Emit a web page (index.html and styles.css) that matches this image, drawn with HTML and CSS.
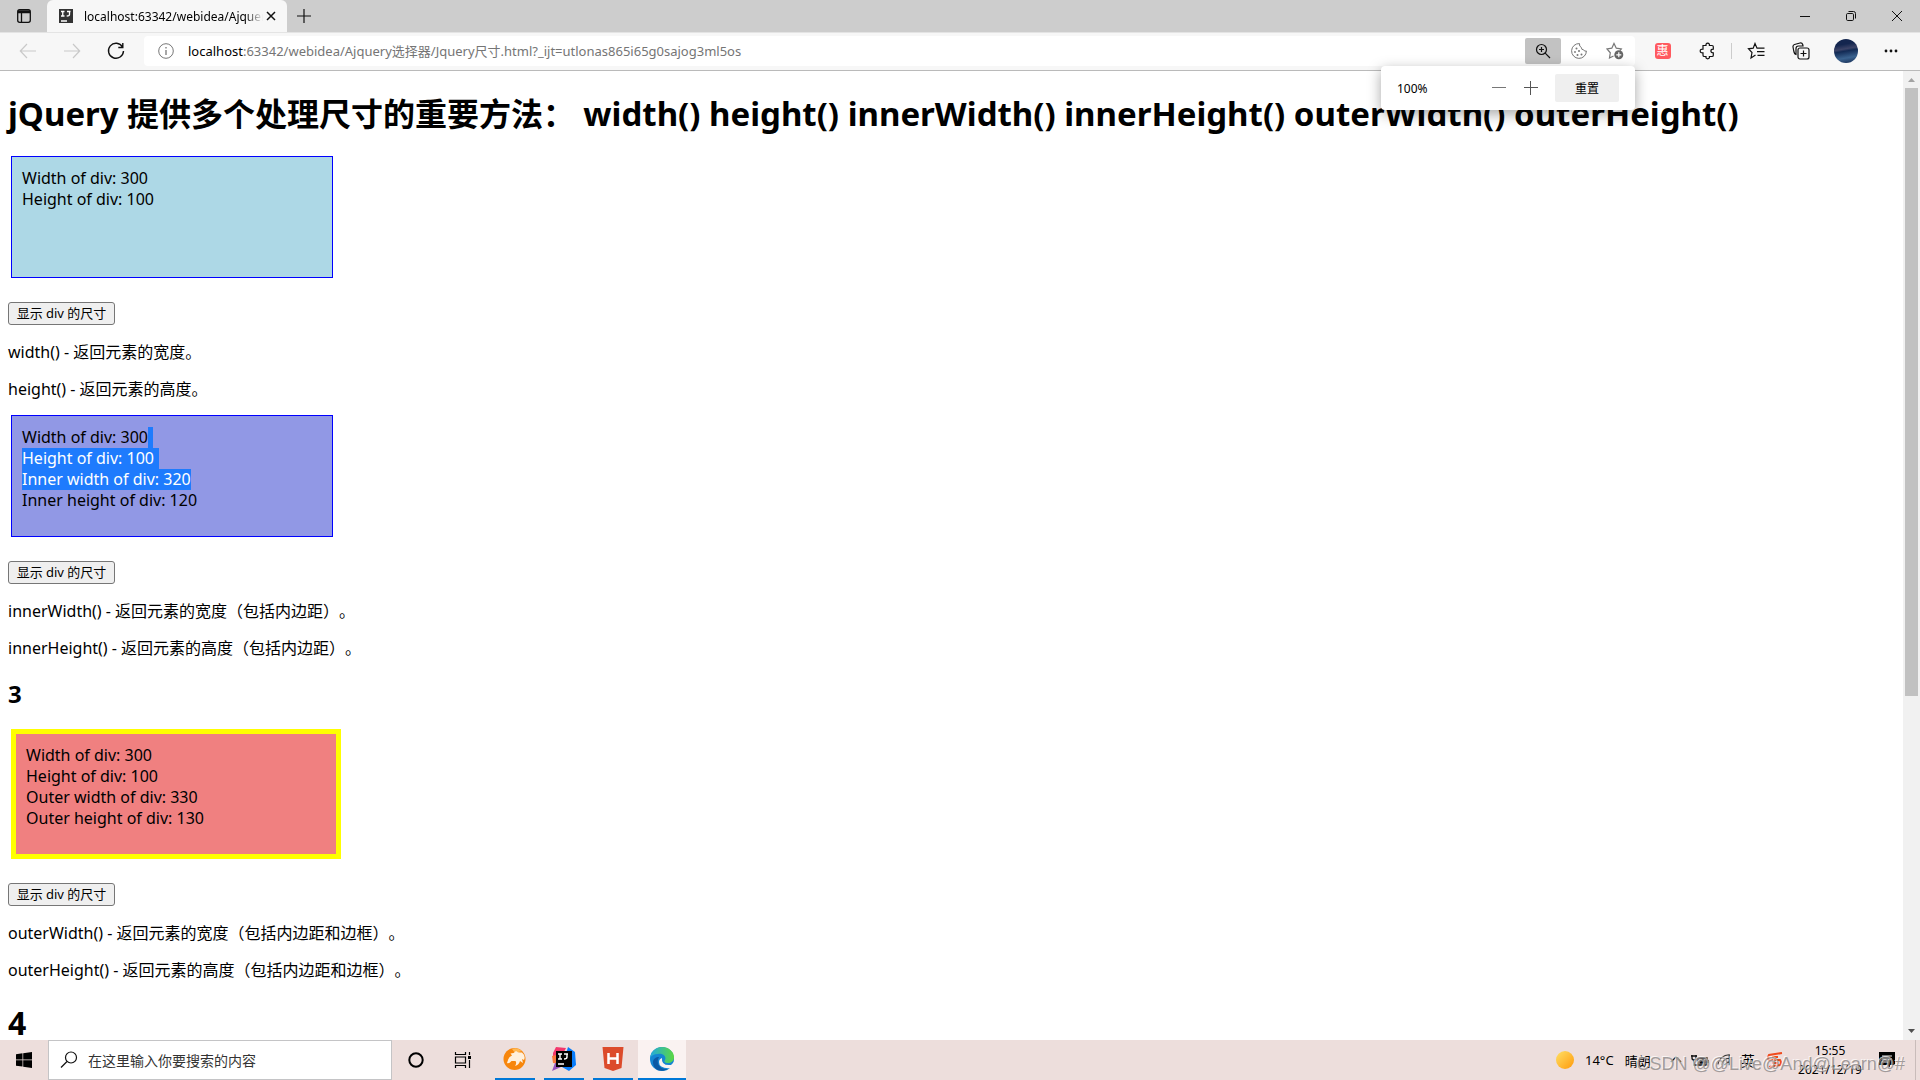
FILE: index.html
```html
<!DOCTYPE html>
<html lang="zh-CN">
<head>
<meta charset="utf-8">
<title>Jquery尺寸</title>
<link rel="stylesheet" href="styles.css">
</head>
<body>
<header class="browser">
  <div class="tabstrip">
    <button class="tab-menu" aria-label="标签页操作菜单"><svg width="16" height="16" viewBox="0 0 16 16" fill="none" stroke="#111" stroke-width="1.3"><rect x="1.7" y="1.7" width="12.6" height="12.6" rx="2"/><path d="M2 3h12M2 4.500h12M5.500 5v9"/></svg></button>
    <div class="tab">
      <svg width="14" height="14" viewBox="0 0 14 14"><path fill="#333" d="M0 0h14v14H0z"/><path d="M2 2.500h3.500M3.750 2.500v4.500M2 7h3.500M8 2.500h3.500M10.500 2.500v3q0 1.500-2.800 1.500M2 12h6" stroke="#fff" stroke-width="1.300" fill="none"/></svg>
      <span class="tab-title">localhost:63342/webidea/Ajquery</span>
      <button class="tab-close" aria-label="关闭标签页"><svg width="10" height="10" viewBox="0 0 10 10" stroke="#111" stroke-width="1.500"><path d="M1 1l8 8M9 1L1 9"/></svg></button>
    </div>
    <button class="new-tab" aria-label="新建标签页"><svg width="16" height="16" viewBox="0 0 16 16" stroke="#111" stroke-width="1.200"><path d="M8 1v14M1 8h14"/></svg></button>
    <div class="window-controls">
      <button aria-label="最小化"><svg width="12" height="12" viewBox="0 0 12 12" stroke="#111"><path d="M1 6.500h10"/></svg></button>
      <button aria-label="还原"><svg width="12" height="12" viewBox="0 0 12 12" fill="none" stroke="#111"><rect x="1.500" y="3.500" width="7" height="7" rx="1.200"/><path d="M3.500 1.500h5q2 0 2 2v5"/></svg></button>
      <button aria-label="关闭"><svg width="12" height="12" viewBox="0 0 12 12" stroke="#111"><path d="M1 1l10 10M11 1L1 11"/></svg></button>
    </div>
  </div>
  <div class="toolbar">
    <div class="nav">
      <button aria-label="后退"><svg width="18" height="18" viewBox="0 0 18 18" fill="none" stroke="#c9c9c9" stroke-width="1.200"><path d="M17 9H1.500M8 2L1.300 9 8 16"/></svg></button>
      <button aria-label="前进"><svg width="18" height="18" viewBox="0 0 18 18" fill="none" stroke="#c9c9c9" stroke-width="1.200"><path d="M1 9h15.500M10 2l6.700 7-6.700 7"/></svg></button>
      <button aria-label="刷新"><svg width="18" height="18" viewBox="0 0 18 18" fill="none" stroke="#111" stroke-width="1.400"><path d="M15.500 5A7.500 7.500 0 1 0 16.500 9M15.800 1v4.500h-4.500"/></svg></button>
    </div>
    <div class="address">
      <svg width="16" height="16" viewBox="0 0 16 16" fill="none" stroke="#777"><circle cx="8" cy="8" r="7.300"/><path d="M8 7v5M8 4v1.500" stroke-width="1.300"/></svg>
      <div class="url" role="textbox" aria-label="地址栏" contenteditable="true" spellcheck="false"><span class="host">localhost</span>:63342/webidea/Ajquery选择器/Jquery尺寸.html?_ijt=utlonas865i65g0sajog3ml5os</div>
      <button class="zoomed" aria-label="缩放"><svg width="16" height="16" viewBox="0 0 16 16" fill="none" stroke="#111" stroke-width="1.200"><circle cx="6.500" cy="6.500" r="5"/><path d="M10.200 10.200L15 15M6.500 4v5M4 6.500h5"/></svg></button>
      <button aria-label="Cookie"><svg width="16" height="16" viewBox="0 0 16 16" fill="none" stroke="#777"><path d="M8.500.600A7.400 7.400 0 1 0 15.400 8q-2 .8-2.800-1.200-2.300.2-2.200-2.300Q8 3.600 8.500.600z"/><g fill="#777" stroke="none"><circle cx="5.500" cy="5.500" r="1"/><circle cx="8" cy="8" r="1"/><circle cx="4" cy="9" r=".9"/><circle cx="6.500" cy="12" r="1"/><circle cx="10.500" cy="11.500" r="1"/></g></svg></button>
      <button aria-label="添加到收藏夹"><svg width="18" height="18" viewBox="0 0 18 18" fill="none" stroke="#777" stroke-width="1.200"><path d="M7.500 14L3.500 16l.8-5.200L1 7l4.800-.8L8 1.500l2.300 4.700 5 .8-1.300 1.500"/><circle cx="12.800" cy="12.800" r="4.500" fill="#666" stroke="none"/><path stroke="#fff" d="M12.800 10.300v5M10.300 12.800h5"/></svg></button>
      <div class="zoom-popup" role="dialog" aria-label="页面缩放">
        <span class="zoom-level">100%</span>
        <button class="zoom-step" aria-label="缩小"><svg width="14" height="14" viewBox="0 0 14 14" stroke="#777"><path d="M0 6.500h14"/></svg></button>
        <button class="zoom-step" aria-label="放大"><svg width="14" height="14" viewBox="0 0 14 14" stroke="#555"><path d="M0 6.500h14M6.500 0v14"/></svg></button>
        <button class="zoom-reset">重置</button>
      </div>
    </div>
    <div class="actions">
      <button aria-label="惠"><span class="deal">惠</span></button>
      <button aria-label="扩展"><svg width="18" height="18" viewBox="0 0 18 18" fill="none" stroke="#111" stroke-width="1.200"><path d="M4 3.500h3q-.4-2.300 1.700-2.300t1.700 2.300H13q1.300 0 1.300 1.300v2.400q-2.400 0-2.400 1.800t2.400 1.800v2.400q0 1.300-1.300 1.300h-2.600q.4 2.300-1.700 2.300T7 14.500H5.300Q4 14.500 4 13.200v-2.400q-2.800.2-2.800-1.800T4 7.200z"/></svg></button>
      <span class="divider"></span>
      <button aria-label="收藏夹"><svg width="18" height="18" viewBox="0 0 18 18" fill="none" stroke="#111" stroke-width="1.200"><path d="M8.500 13L4 16l1-5.500L1.500 6.800l4.700-.6L8 1.500l2 4.700h7.500M10 9.700h7.500M10.500 13.300h7"/></svg></button>
      <button aria-label="集锦"><svg width="18" height="18" viewBox="0 0 18 18" fill="none" stroke="#111" stroke-width="1.200"><rect x="6" y="6" width="11" height="11" rx="2"/><path d="M11.500 8.500v6M8.500 11.500h6M4 12.500Q2.500 12 2 10L1 5q-.2-2 1.500-2.500L8 1q2-.4 2.700 1.500L11 4H6.500Q4 4 4 6.500z"/></svg></button>
      <button aria-label="个人资料"><span class="avatar"></span></button>
      <button aria-label="设置及其他"><svg width="14" height="4" viewBox="0 0 14 4" fill="#111"><circle cx="2" cy="2" r="1.400"/><circle cx="7" cy="2" r="1.400"/><circle cx="12" cy="2" r="1.400"/></svg></button>
    </div>
  </div>
</header>

<div class="viewport">
  <main class="page">
    <h1><span class="latin">jQuery</span> 提供多个处理尺寸的重要方法： <span class="latin">width() height() innerWidth() innerHeight() outerWidth() outerHeight()</span></h1>
    <div class="box box-blue">Width of div: 300<br>Height of div: 100</div>
    <button class="show">显示 div 的尺寸</button>
    <p>width() - 返回元素的宽度。</p>
    <p>height() - 返回元素的高度。</p>
    <div class="box box-violet">Width of div: 300<mark class="line-end"></mark><br><mark class="line-end">Height of div: 100</mark><br><mark>Inner width of div: 320</mark><br>Inner height of div: 120</div>
    <button class="show">显示 div 的尺寸</button>
    <p>innerWidth() - 返回元素的宽度（包括内边距）。</p>
    <p>innerHeight() - 返回元素的高度（包括内边距）。</p>
    <h2>3</h2>
    <div class="box box-coral">Width of div: 300<br>Height of div: 100<br>Outer width of div: 330<br>Outer height of div: 130</div>
    <button class="show">显示 div 的尺寸</button>
    <p>outerWidth() - 返回元素的宽度（包括内边距和边框）。</p>
    <p>outerHeight() - 返回元素的高度（包括内边距和边框）。</p>
    <h1>4</h1>
  </main>
  <div class="scrollbar">
    <svg width="17" height="17" viewBox="0 0 17 17"><path fill="#a3a3a3" d="M5 11h7L8.500 7z"/></svg>
    <div class="track"><div class="thumb"></div></div>
    <svg width="17" height="17" viewBox="0 0 17 17"><path fill="#505050" d="M5 6h7l-3.500 4z"/></svg>
  </div>
</div>

<footer class="taskbar">
  <button class="start" aria-label="开始"><svg width="16" height="16" viewBox="0 0 16 16"><path d="M0 2.300L6.500 1.300V7.600H0zM7.200 1.200L16 0v7.600H7.200zM0 8.300h6.500v6.300L0 13.700zM7.200 8.300H16V16l-8.800-1.200z"/></svg></button>
  <label class="search">
    <svg width="18" height="18" viewBox="0 0 18 18" fill="none" stroke="#111" stroke-width="1.200"><circle cx="11" cy="6.500" r="5.500"/><path d="M7 10.500L1 16.500"/></svg>
    <input type="text" placeholder="在这里输入你要搜索的内容" aria-label="搜索">
  </label>
  <nav class="apps">
    <button aria-label="Cortana"><svg width="16" height="16" viewBox="0 0 16 16" fill="none" stroke="#000" stroke-width="2"><circle cx="8" cy="8" r="6.700"/></svg></button>
    <button aria-label="任务视图"><svg width="18" height="16" viewBox="0 0 18 16" fill="none" stroke="#000" stroke-width="1.200"><path d="M1.500 0v2.500h10V0M1.500 16v-2.500h10V16M1.500 5h10v6h-10zM15.500 0v3M15.500 8v8"/><path fill="#000" stroke="none" d="M14 4h3v3h-3z"/></svg></button>
    <button class="running" aria-label="UC浏览器"><svg width="24" height="24" viewBox="0 0 24 24"><circle cx="11.500" cy="12" r="11" fill="#f7860c"/><path fill="#ffb955" d="M9 2Q14 0 19 4L12 6z"/><path fill="#fff0dc" d="M4 16Q5 10 9 8.500L7.500 6.500Q11 6.500 13 4Q15 6 19 5.500Q23 9 21 13L19 12L20 16L17 14Q16 18 12 19Q14 16 12.500 14L8.500 14Q6 17 4 16z"/></svg></button>
    <button class="running" aria-label="IntelliJ IDEA"><svg width="24" height="24" viewBox="0 0 24 24"><path fill="#f3386c" d="M1 6L4 0l10 1-8 16-5-4z"/><path fill="#f97a3d" d="M0 9l8-2v10l-7-1z"/><path fill="#087cfa" d="M16 0l7 5 1 13-7 6-7-4z"/><path fill="#9753bd" d="M3 16h12l-6 4-9 4z"/><path d="M4 4h16v16H4z"/><path d="M6 7h4M8 7v5M6 12h4M12 7h4M15 7v3q0 2-3 2M6 17h6" stroke="#fff" stroke-width="1.400" fill="none"/></svg></button>
    <button class="running" aria-label="HBuilder"><svg width="24" height="24" viewBox="0 0 24 24"><path fill="#dc4b2b" d="M1.500 0h21l-2 21-8.500 3-8.500-3z"/><path d="M7.500 6v11M16.500 6v11M7.500 11.500h9" stroke="#fff" stroke-width="2.500"/></svg></button>
    <button class="running active" aria-label="Microsoft Edge"><svg width="24" height="24" viewBox="0 0 24 24"><defs><linearGradient id="sea" x1="0" x2="1"><stop stop-color="#22a9e0"/><stop offset="1" stop-color="#5bd83f"/></linearGradient></defs><circle cx="12" cy="12" r="12" fill="#1485d2"/><path fill="url(#sea)" d="M0 11C1 4 6 0 12 0c7 0 12 5 12 10 0 4-3 6-6 6-4 0-4-2-3-3 2-4-3-7-7-6-4 0-7 2-8 4z"/><path fill="#0c59a4" d="M9 10c-4 7 2 13 9 12-7 4-15 1-15-7 0-3 3-5 6-5z"/><path fill="#faf2f1" d="M12 11q-1 8 9 7l3-3v3l-3 3q-12 1-12-6 0-3 3-4z"/></svg></button>
  </nav>
  <div class="tray">
    <button class="weather"><span class="sun"></span><span>14°C</span><span>晴朗</span></button>
    <button aria-label="显示隐藏的图标"><svg width="14" height="14" viewBox="0 0 14 14" fill="none" stroke="#222" stroke-width="1.300"><path d="M2 9l5-5 5 5"/></svg></button>
    <button aria-label="电源"><svg width="18" height="14" viewBox="0 0 18 14" fill="none" stroke="#111" stroke-width="1.300"><path d="M7 5h9v7H7zM17 7v3M1 2v3q0 2 2 2t2-2V2M0 3h6M3 7v5h4"/><path fill="#111" d="M9 7h5v3H9z"/></svg></button>
    <button aria-label="网络"><svg width="14" height="14" viewBox="0 0 16 16" fill="none" stroke="#333" stroke-width="1.300"><path d="M1 13A13 13 0 0 1 14 2v12M5 14A9 9 0 0 1 14 6M9 14q1-3 5-4"/></svg></button>
    <button class="ime">英</button>
    <button class="sogou" aria-label="搜狗输入法"><svg width="18" height="18" viewBox="0 0 18 18" fill="none" stroke="#f04a1d" stroke-width="2"><path d="M16 2L3 4q-2 3 0 5l11 0q2 3 0 5L3 16M12 6H6M6 12h6"/></svg></button>
    <button class="clock"><span>15:55</span><span>2021/12/19</span></button>
    <button class="notice" aria-label="通知中心"><svg width="16" height="16" viewBox="0 0 16 16"><path d="M0 0h16v13h-5v3l-3-3H0z"/><path d="M3 4h10M3 7h10M3 10h6" stroke="#eee"/></svg></button>
  </div>
</footer>
<div class="watermark">CSDN @@Live@And@Learn@#</div>
</body>
</html>
```
FILE: styles.css
```css
* { box-sizing: border-box; }

body {
  margin: 0;
  height: 100vh;
  display: flex;
  flex-direction: column;
  overflow: hidden;
  position: relative;
  background: #fff;
  color: #000;
  font-family: "Noto Sans", "Noto Sans CJK SC", sans-serif;
  font-size: 12px;
  text-spacing-trim: space-all;
}

button {
  font: inherit;
  color: inherit;
  border: 0;
  padding: 0;
  background: none;
  display: flex;
  align-items: center;
  justify-content: center;
  flex: none;
}

svg { display: block; flex: none; }

/* Tab strip */
.tabstrip {
  display: flex;
  height: 32px;
  background: #cdcdcd;
}
.tab-menu { width: 47px; }
.tab {
  display: flex;
  align-items: center;
  width: 240px;
  padding: 0 8px 0 12px;
  background: #f7f7f7;
  border-radius: 6px 6px 0 0;
}
.tab-title {
  flex: 1;
  margin-left: 11px;
  overflow: hidden;
  white-space: nowrap;
  mask-image: linear-gradient(90deg, #000 90%, transparent);
}
.tab-close { width: 16px; height: 16px; }
.new-tab { width: 34px; }
.window-controls { display: flex; margin-left: auto; }
.window-controls button { width: 46px; }

/* Toolbar */
.toolbar {
  display: flex;
  align-items: flex-start;
  height: 39px;
  padding-top: 3px;
  background: #f7f7f7;
  border-top: 1px solid #e4e4e4;
  border-bottom: 1px solid #bababa;
}
.nav { display: flex; padding: 0 6px; }
.nav button { width: 44px; height: 30px; }
.address {
  position: relative;
  flex: 1;
  display: flex;
  align-items: center;
  height: 30px;
  padding: 0 2px 0 14px;
  background: #fff;
  border-radius: 4px;
}
.address > button { width: 36px; height: 26px; border-radius: 2px; }
.address > .zoomed { background: #c2c2c2; }
.url {
  flex: 1;
  margin: 0 0 2px 14px;
  font-size: 13px;
  color: #757575;
  white-space: nowrap;
  outline: 0;
}
.host { color: #000; }
.actions { display: flex; align-items: center; padding: 0 7px 0 5px; }
.actions button { width: 45px; height: 30px; }
.divider { width: 1px; height: 16px; margin: 0 1px; background: #ccc; }
.deal {
  width: 16px;
  height: 16px;
  border-radius: 3px;
  background: #ff5a5f;
  color: #fff;
  font-size: 12px;
  line-height: 16px;
}
.avatar {
  width: 24px;
  height: 24px;
  border-radius: 50%;
  background: linear-gradient(170deg, #14264f 25%, #3d4468 42%, #122a55 50%, #3b6390 75%, #13284f);
}

.zoom-popup {
  position: absolute;
  z-index: 2;
  top: 100%;
  right: 0;
  display: flex;
  align-items: center;
  width: 254px;
  height: 44px;
  padding: 0 16px;
  background: #fff;
  border-radius: 4px;
  box-shadow: 0 4px 14px rgba(0, 0, 0, .35);
}
.zoom-level { flex: 1; }
.zoom-step { width: 32px; }
.zoom-reset { width: 64px; height: 28px; margin-left: 8px; background: #efefef; border-radius: 2px; }

/* Web page */
.viewport { flex: 1; min-height: 0; display: flex; }
.page {
  flex: 1;
  padding: 1px 8px 0;
  overflow: hidden;
  font-size: 16px;
  line-height: 21px;
}
h1 { margin: 21px 0; font-size: 32px; line-height: 42px; white-space: nowrap; }
.latin { font-size: 33px; line-height: 40px; }
h2 { margin: 19px 0 20px; font-size: 24px; line-height: 31px; }
p { margin: 15px 0; padding-top: 1px; }
.box {
  width: 322px;
  height: 122px;
  margin: 3px 3px 24px;
  padding: 11px 10px 9px;
  border: 1px solid #00f;
}
.box-blue { background: #add8e6; }
.box-violet { background: #9198e5; }
.box-coral { width: 330px; height: 130px; border: 5px solid #ff0; background: #f08080; }
mark {
  display: inline-block;
  height: 21px;
  vertical-align: top;
  background: #1e7bfd;
  color: #fff;
}
.line-end { padding-right: 5px; }
.show {
  width: 107px;
  height: 23px;
  margin-bottom: 16px;
  background: #efefef;
  border: 1px solid #767676;
  border-radius: 3px;
  font-size: 13px;
}

.scrollbar { display: flex; flex-direction: column; width: 17px; background: #f1f1f1; }
.track { flex: 1; padding: 0 2px; }
.thumb { height: 65%; background: #c1c1c1; }

/* Taskbar */
.taskbar { display: flex; height: 40px; background: #eddedc; }
.start { width: 48px; }
.search {
  display: flex;
  align-items: center;
  width: 344px;
  padding: 0 11px;
  background: #fff;
  border: 1px solid #c4c4c6;
}
.search input {
  flex: 1;
  margin-left: 10px;
  padding: 0;
  border: 0;
  outline: 0;
  font: inherit;
  font-size: 14px;
}
.search input::placeholder { color: #333; }
.apps { display: flex; }
.apps button { width: 47px; }
.apps .running {
  width: 40px;
  margin-left: 9px;
  border-bottom: 2px solid #0078d7;
}
.apps .active { width: 48px; margin-left: 5px; background: #faf2f1; }
.tray { display: flex; margin-left: auto; padding-right: 11px; border-right: 1px solid #c9bcba; margin-right: 4px; }
.tray button { width: 24px; }
.tray .weather { width: 108px; justify-content: flex-start; gap: 11px; font-size: 13px; }
.sun { width: 18px; height: 18px; border-radius: 50%; background: linear-gradient(135deg, #ffe066, #ff9a0a); }
.tray .ime { font-size: 14px; }
.tray .sogou { width: 30px; }
.tray .clock { flex-direction: column; width: 80px; line-height: 19px; }
.tray .notice { width: 34px; }

.watermark {
  position: absolute;
  right: 15px;
  bottom: 4px;
  font-family: "Liberation Sans", sans-serif;
  font-size: 18px;
  line-height: 24px;
  color: rgba(140, 135, 135, .8);
  text-shadow: -1px -1px 0 rgba(255, 255, 255, .7);
  pointer-events: none;
}
```
